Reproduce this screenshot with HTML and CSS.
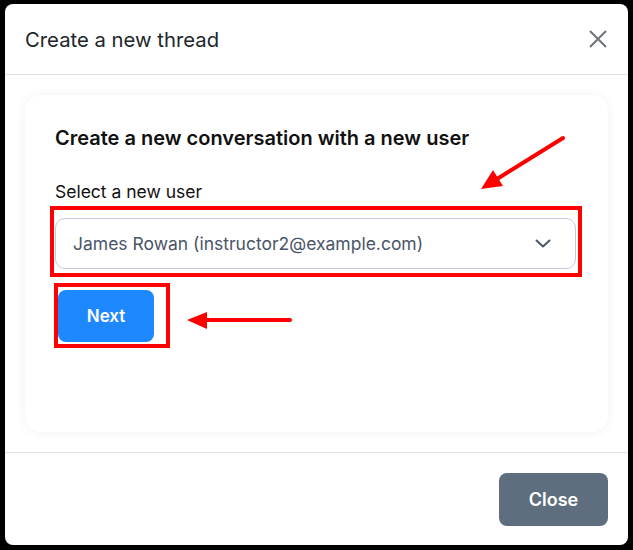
FILE: index.html
```html
<!DOCTYPE html>
<html>
<head>
<meta charset="utf-8">
<link rel="stylesheet" href="styles.css">
</head>
<body>
<div class="modal">
  <div class="modal-header">
    <h2 class="modal-title">Create a new thread</h2>
    <button class="close-x" aria-label="Close">
      <svg width="18" height="18" viewBox="0 0 18 18"><path d="M1 1L17 17M17 1L1 17" stroke="#6c757d" stroke-width="2" fill="none"/></svg>
    </button>
  </div>
  <div class="modal-body">
    <div class="card">
      <h3 class="card-title">Create a new conversation with a new user</h3>
      <label class="field-label">Select a new user</label>
      <div class="select">
        <span class="select-value">James Rowan (instructor2@example.com)</span>
        <svg class="chevron" width="16" height="9" viewBox="0 0 16 9"><path d="M1.5 1.5L8 7.5L14.5 1.5" stroke="#4a5568" stroke-width="2" fill="none" stroke-linecap="round" stroke-linejoin="round"/></svg>
      </div>
      <button class="btn btn-primary">Next</button>
    </div>
  </div>
  <div class="modal-footer">
    <button class="btn btn-secondary">Close</button>
  </div>
</div>
<svg class="annotations" width="633" height="550" viewBox="0 0 633 550">
  <rect x="52" y="208" width="528" height="67" fill="none" stroke="#ff0000" stroke-width="4"/>
  <rect x="56" y="285" width="112" height="61" fill="none" stroke="#ff0000" stroke-width="4"/>
  <line x1="563" y1="138" x2="497" y2="179" stroke="#ff0000" stroke-width="4" stroke-linecap="round"/>
  <polygon points="481,189 503,186 493,170" fill="#ff0000"/>
  <line x1="290" y1="320" x2="204" y2="320" stroke="#ff0000" stroke-width="4" stroke-linecap="round"/>
  <polygon points="187,320 207,312 207,329" fill="#ff0000"/>
</svg>
</body>
</html>
```
FILE: styles.css
```css
html, body {
  margin: 0;
  padding: 0;
  background: #000;
  width: 633px;
  height: 550px;
  overflow: hidden;
}
body {
  position: relative;
  font-family: Inter, "Noto Sans", sans-serif;
  padding: 4px 0 0 5px;
  box-sizing: border-box;
}
.modal {
  width: 623px;
  height: 541px;
  background: #fff;
  border-radius: 8px;
  display: flex;
  flex-direction: column;
  box-sizing: border-box;
}
.modal-header {
  height: 71px;
  box-sizing: border-box;
  border-bottom: 1px solid #dee2e6;
  display: flex;
  align-items: center;
  justify-content: space-between;
  padding: 2px 20px 0 20px;
}
.modal-title {
  margin: 0;
  font-size: 20.3px;
  font-weight: 400;
  color: #212529;
  line-height: 24px;
}
.close-x {
  border: 0;
  background: none;
  padding: 0;
  margin-right: 1px;
  margin-bottom: 2px;
  display: flex;
}
.modal-body {
  padding: 20px;
}
.card {
  height: 337px;
  box-sizing: border-box;
  border-radius: 16px;
  background: #fff;
  box-shadow: 0 0 12px rgba(0, 0, 0, 0.06);
  padding: 31px 32px 0 30px;
  display: flex;
  flex-direction: column;
  align-items: flex-start;
}
.card-title {
  margin: 0;
  font-size: 20px;
  font-weight: 600;
  line-height: 24px;
  color: #111;
}
.field-label {
  margin-top: 30px;
  font-size: 17.5px;
  line-height: 24px;
  color: #111;
}
.select {
  margin-top: 14px;
  align-self: stretch;
  height: 51px;
  box-sizing: border-box;
  border: 1px solid #c5cadb;
  border-radius: 10px;
  display: flex;
  align-items: center;
  justify-content: space-between;
  padding: 0 24px 0 17px;
}
.select-value {
  font-size: 17.5px;
  color: #4a5568;
}
.chevron {
  display: block;
}
.btn {
  border: 0;
  font-family: Inter, "Noto Sans", sans-serif;
  font-weight: 600;
  font-size: 17px;
  color: #fff;
  border-radius: 8px;
  cursor: pointer;
}
.btn-primary {
  margin-top: 21px;
  margin-left: 3px;
  width: 96px;
  height: 52px;
  background: #1e88ff;
}
.modal-footer {
  border-top: 1px solid #dee2e6;
  display: flex;
  justify-content: flex-end;
  padding: 20px 20px 0 20px;
}
.btn-secondary {
  width: 109px;
  height: 53px;
  background: #5f6e7e;
  font-size: 18px;
}
.annotations {
  position: absolute;
  left: 0;
  top: 0;
  pointer-events: none;
}
```
